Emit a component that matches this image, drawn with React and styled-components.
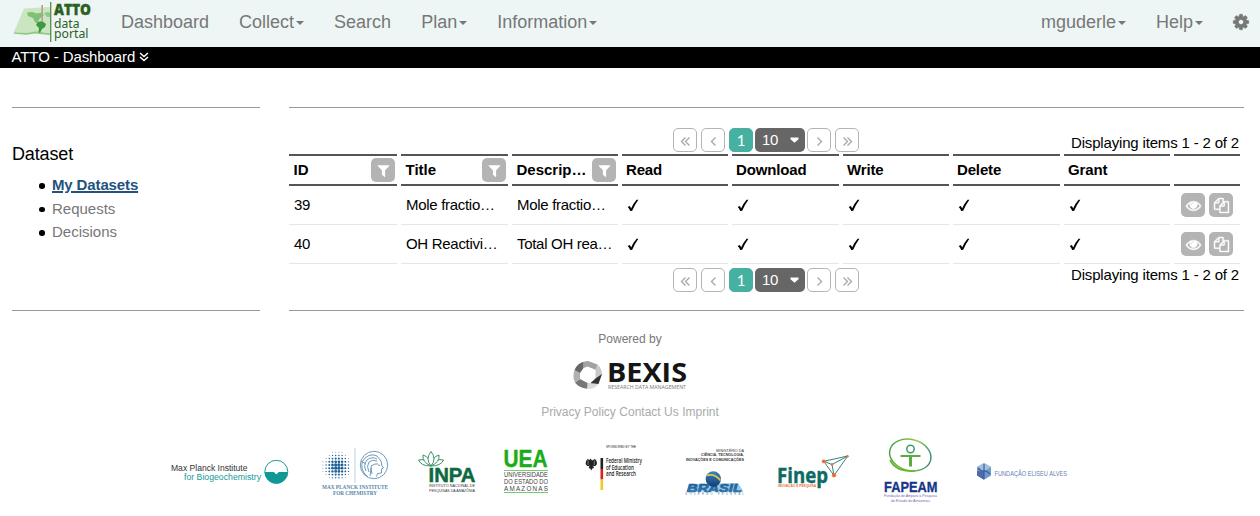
import React from "react";
import styled, { createGlobalStyle } from "styled-components";

const GlobalStyle = createGlobalStyle`
  * { box-sizing: border-box; }
  body {
    margin: 0;
    background: #fff;
    color: #000;
    font: 15px/20px "Liberation Sans", Arial, sans-serif;
    overflow: hidden;
  }
  svg { display: block; flex: none; overflow: visible; }
`;

const Page = styled.div`
  display: flex;
  flex-direction: column;
  height: 516px;
`;

const Navbar = styled.nav`
  display: flex;
  align-items: center;
  height: 47px;
  padding: 0 10px 4px 12px;
  background: #edf6f5;
  color: #777;
`;

const NavGroup = styled.div`
  display: flex;
  align-items: center;
  gap: 30px;
  margin-left: ${(p) => (p.$end ? "auto" : "29px")};
`;

const NavItem = styled.a`
  display: flex;
  align-items: center;
  margin-left: ${(p) => (p.$icon ? -1 : 0)}px;
  font-size: 18px;
  line-height: 20px;
  white-space: nowrap;
`;

const Caret = styled.span`
  margin: 2px 0 0 2px;
  border: 4px solid transparent;
  border-top-color: currentColor;
  border-bottom: 0;
`;

const TitleBar = styled.div`
  display: flex;
  align-items: center;
  gap: 4px;
  height: 21px;
  padding: 0 12px 1px 11.5px;
  background: #000;
  color: #fff;
  letter-spacing: -0.1px;
`;

const Columns = styled.main`
  display: flex;
  gap: 29px;
  margin: 39px 16px 0 12px;
`;

const Panel = styled.section`
  width: ${(p) => p.$width}px;
  height: 204px;
  border: solid #999;
  border-width: 1px 0;
`;

const SideTitle = styled.h2`
  margin: 36px 0 11px;
  font-size: 18px;
  font-weight: 400;
  line-height: 20px;
  letter-spacing: -0.15px;
`;

const SideList = styled.ul`
  display: flex;
  flex-direction: column;
  gap: 3.6px;
  margin: 0;
  padding: 0 0 0 27px;
  list-style: none;
`;

const SideItem = styled.li`
  display: flex;
  align-items: center;
  gap: 7.500px;
  &::before {
    content: "";
    width: 5.500px;
    height: 5.500px;
    margin-top: 2px;
    border-radius: 50%;
    background: #000;
  }
`;

const SideLink = styled.a`
  color: ${(p) => (p.$active ? "#23527c" : "#777")};
  font-weight: ${(p) => (p.$active ? 700 : 400)};
  letter-spacing: ${(p) => (p.$active ? "-0.13px" : "0")};
  text-decoration: ${(p) => (p.$active ? "underline" : "none")};
  text-decoration-thickness: 2px;
`;

const PagerBar = styled.div`
  display: flex;
  justify-content: space-between;
  height: 24px;
  padding: 0 5px 0 384px;
`;

const PagerButtons = styled.div`
  display: flex;
  gap: 4px;
`;

const PagerCurrent = styled.div`
  display: flex;
  gap: 2px;
  margin-right: -2px;
`;

const PagerButton = styled.button`
  display: flex;
  align-items: center;
  justify-content: center;
  width: 24px;
  height: 24px;
  padding: ${(p) => (p.$active ? "0 0 1px" : "2px 0 0")};
  border: 1px solid ${(p) => (p.$active ? "#46b1a1" : "#b4b4b4")};
  border-radius: 5px;
  background: ${(p) => (p.$active ? "#46b1a1" : "#fff")};
  color: ${(p) => (p.$active ? "#fff" : "#aaa")};
  font: 15px/20px Lato, sans-serif;
`;

const PageSize = styled.div`
  display: flex;
  align-items: center;
  justify-content: space-between;
  width: 50px;
  height: 24px;
  padding: 0 6px 0 7px;
  border-radius: 5px;
  background: #666;
  color: #fff;
  letter-spacing: -0.3px;
`;

const PagerInfo = styled.span`
  margin-top: ${(p) => p.$offset}px;
  letter-spacing: -0.17px;
  white-space: nowrap;
`;

const Table = styled.div`
  margin: 2px 0 4px;
`;

const Row = styled.div`
  display: grid;
  grid-template-columns: 108px 107px 106px 106px 107px 106px 107px 106px 66px;
  column-gap: 4px;
`;

const HeadCell = styled.div`
  display: flex;
  align-items: center;
  justify-content: space-between;
  height: 32px;
  padding: 0 2px 0 ${(p) => (p.$filter ? 4.5 : 4)}px;
  border: solid #555;
  border-width: 2px 0;
  font-weight: 700;
  letter-spacing: ${(p) => (p.$filter ? "0" : "-0.15px")};
`;

const Cell = styled.div`
  display: flex;
  align-items: center;
  gap: 4px;
  height: 39px;
  padding: 0 0 0 ${(p) => p.$pad ?? 5}px;
  border-bottom: 1px solid #e6e6e6;
  letter-spacing: -0.3px;
  white-space: nowrap;
`;

const IconButton = styled.button`
  display: flex;
  align-items: center;
  justify-content: center;
  width: 24px;
  height: 24px;
  flex: none;
  padding: 0;
  border: 0;
  border-radius: 5px;
  background: #b4b4b4;
  color: #fff;
`;

const Footer = styled.footer`
  display: flex;
  flex-direction: column;
  align-items: center;
  margin-top: 18px;
  color: #777;
  font-size: 12px;
`;

const FooterLinks = styled.div`
  display: flex;
  gap: 3.5px;
  margin-top: 10px;
  color: #aaa;
`;

const LogoRow = styled.div`
  display: flex;
  align-self: flex-start;
  margin: 10px 0 0 168px;
`;

const GLYPHS = {
  filter:
    "M1595 295q17 41-14 70l-493 493v742q0 42-39 59-13 5-25 5-27 0-45-19l-256-256q-19-19-19-45v-486l-493-493q-31-29-14-70 17-39 59-39h1280q42 0 59 39z",
  eye: "M1664 960q-152-236-381-353 61 104 61 225 0 185-131.5 316.5t-316.5 131.5-316.5-131.5-131.5-316.5q0-121 61-225-229 117-381 353 133 205 333.5 326.5t434.5 121.5 434.5-121.5 333.5-326.5zm-720-384q0-20-14-34t-34-14q-125 0-214.5 89.5t-89.5 214.5q0 20 14 34t34 14 34-14 14-34q0-86 61-147t147-61q20 0 34-14t14-34zm848 384q0 34-20 69-140 230-376.5 368.5t-499.5 138.5-499.5-139-376.5-368q-20-35-20-69t20-69q140-229 376.5-368t499.5-139 499.5 139 376.5 368q20 35 20 69z",
  files:
    "M1696 384q40 0 68 28t28 68v1216q0 40-28 68t-68 28h-960q-40 0-68-28t-28-68v-288h-544q-40 0-68-28t-28-68v-672q0-40 20-88t48-76l408-408q28-28 76-48t88-20h416q40 0 68 28t28 68v328q68-40 128-40h416zm-544 213l-299 299h299v-299zm-640-384l-299 299h299v-299zm196 647l316-316v-416h-384v416q0 40-28 68t-68 28h-416v640h512v-256q0-40 20-88t48-76zm956 804v-1152h-384v416q0 40-28 68t-68 28h-416v640h896z",
  cog: "M1152 896q0-106-75-181t-181-75-181 75-75 181 75 181 181 75 181-75 75-181zm512-109v222q0 12-8 23t-20 13l-185 28q-19 54-39 91 35 50 107 138 10 12 10 25t-9 23q-27 37-99 108t-94 71q-12 0-26-9l-138-108q-44 23-91 38-16 136-29 186-7 28-36 28h-222q-14 0-24.5-8.5t-11.5-21.5l-28-184q-49-16-90-37l-141 107q-10 9-25 9-14 0-25-11-126-114-165-168-7-10-7-23 0-12 8-23 15-21 51-66.5t54-70.5q-27-50-41-99l-183-27q-13-2-21-12.5t-8-23.5v-222q0-12 8-23t19-13l186-28q14-46 39-92-40-57-107-138-10-12-10-24 0-10 9-23 26-36 98.5-107.5t94.5-71.500q13 0 26 10l138 107q44-23 91-38 16-136 29-186 7-28 36-28h222q14 0 24.5 8.5t11.5 21.5l28 184q49 16 90 37l142-107q9-9 24-9 13 0 25 10 129 119 165 170 7 8 7 22 0 12-8 23-15 21-51 66.5t-54 70.5q26 50 41 98l183 28q13 2 21 12.5t8 23.5z",
};

const Glyph = ({ name, size = 16, weight = 0 }) => (
  <svg width={size} height={size} viewBox="0 0 1792 1792" fill="currentColor" stroke="currentColor" strokeWidth={weight}>
    <path d={GLYPHS[name]} />
  </svg>
);

const ANGLES = {
  first: "M5.5 1.5 1.500 5.500l4 4M9.500 1.500l-4 4 4 4",
  prev: "M7.500 1.500l-4 4 4 4",
  next: "M3.500 1.500l4 4-4 4",
  last: "M1.500 1.500l4 4-4 4M5.500 1.500l4 4-4 4",
};

const Angle = ({ name }) => (
  <svg width="11" height="11" viewBox="0 0 11 11" fill="none" stroke="currentColor" strokeWidth="1.4">
    <path d={ANGLES[name]} />
  </svg>
);

const Check = () => (
  <svg width="12" height="13" viewBox="0 0 12 13">
    <path d="M.7 8.100 2.800 7q.9 1.200 1.300 2.600Q6.400 4.300 9.600.8l1.800-.1Q7.600 5.800 5.200 11.800l-2 .2Q2.300 9.800.7 8.100z" />
  </svg>
);

/* Text stretched to a fixed width, as used inside the partner logos. */
const T = ({ x, y, w, s, children, ...rest }) => (
  <text x={x} y={y} fontSize={s} textLength={w} lengthAdjust="spacingAndGlyphs" {...rest}>
    {children}
  </text>
);

const Logo = ({ x, w, children }) => (
  <svg width={w} height="76" viewBox={`${x} 432 ${w} 76`} fontFamily="Liberation Sans, sans-serif">
    {children}
  </svg>
);

const AttoLogo = () => (
  <svg width="80" height="43" viewBox="12 0 80 43" fontFamily="Noto Sans, sans-serif" fill="#2a611e">
    <path d="M24 8.500 50 7v27.500L35 32.500l-9 1.500-12.500-1z" fill="#c9e6c0" />
    <path d="M14 32.500 27 33l9-1.500 14 2v1.500L35 33.500l-9 1.200-12-1z" fill="#8fc886" />
    <path d="M27 12.500l5-.5 5 1.500 5-1 2 3-3 2-2 2-1 3 3 2-2 .5-4-3-2-4-5-2z" fill="#7fc077" />
    <path d="M38 22l4-1 4 3-1 3-3 2-2 4-1.500-1 .5-4-3-3z" fill="#3d9a3e" />
    <path d="M44 13l4-1 2 1v4l-3 0z" fill="#8fca87" />
    <path d="M42.200 5v17" stroke="#b9a095" strokeWidth="1.600" />
    <path d="M50.700 2v40" stroke="#5b8a53" strokeWidth="1.300" />
    <T x="54" y="15.200" w="37" s="16.500" fontFamily="Open Sans, sans-serif" fontWeight="800" stroke="#2a611e" strokeWidth=".4">ATTO</T>
    <T x="54" y="27.700" w="25.500" s="13">data</T>
    <T x="54" y="38.300" w="34.500" s="13">portal</T>
  </svg>
);

const BexisLogo = () => (
  <svg width="116" height="43" viewBox="572 349 116 43">
    <path d="M583.500 361.700 588 361l9.500 3.500-1.500 5.500-8.500-3.500-4 1.500z" fill="#a2a2a2" />
    <path d="M597.500 364.500q4.300 4 4.500 10l-6.500 5.500v-11z" fill="#c8c8c8" />
    <path d="M602 374 598.500 384l-8.500-.5 5.500-5z" fill="#333" />
    <path d="M598.500 384q-4 5.500-12 5l-5-2 6-4.500 4 1z" fill="#dadada" />
    <path d="M587 388.500q-8-.5-12-6l5-3.500 7.500 4z" fill="#777" />
    <path d="M575 382.500q-3-6-.5-12.500l5.500 3v6z" fill="#b0b0b0" />
    <path d="M574.500 370q2.500-6.500 9-8.300v6.300l-3.500 5z" fill="#666" />
    <T x="607" y="382" w="80" s="27" fontFamily="Open Sans, sans-serif" fontWeight="700" fill="#151515">BEXIS</T>
    <T x="608" y="388.700" w="78" s="5" fontFamily="Open Sans, sans-serif" fill="#777">RESEARCH DATA MANAGEMENT</T>
  </svg>
);

const HALFTONE = [];
for (let r = -4; r <= 4; r++)
  for (let c = -4; c <= 4; c++) {
    const d = Math.hypot(r - 0.5, c - 0.5);
    if (d < 4.8) HALFTONE.push([335.7 + c * 3.2, 465 + r * 3.2, Math.max(0.45, 1.9 - d * 0.33)]);
  }

const BiogeochemistryLogo = () => (
  <Logo x={168} w={140}>
    <T x="171" y="470.700" w="76.500" s="8.500" fill="#333">Max Planck Institute</T>
    <T x="184" y="480" w="77" s="8.500" fill="#159a9a">for Biogeochemistry</T>
    <circle cx="276.300" cy="471.800" r="11.500" fill="#fff" stroke="#159a9a" />
    <path d="M264.800 472h8.500q1.500 0 2 1.500 1 1.500 2 0 .5-1.500 2-1.500h8.500a11.500 11.500 0 0 1-23 0z" fill="#0f9896" />
  </Logo>
);

const ChemistryLogo = () => (
  <Logo x={308} w={96}>
    {HALFTONE.map(([x, y, r]) => (
      <circle key={`${x},${y}`} cx={x} cy={y} r={r} fill="#1f6196" />
    ))}
    <path d="M355 448v35" stroke="#a9c5d8" strokeWidth=".8" />
    <g fill="none" stroke="#5f8fb3" strokeWidth=".9">
      <circle cx="374" cy="465" r="13.700" />
      <path d="M364 473q-5-9 1-15 6-5 12-2l4 5 1 5 1.500 2-2 1v4l-4 .5-1 3M366 471q-3-6 1-11 5-4 10-1M369 472q-3-6 0-10 3-3 8-1M372 474q-1-4-1-8l4-2 3 0M378 465l2 .5M364 473l4 4M371 468l-1 8M361 461l5 3" />
    </g>
    <g fontFamily="Liberation Serif, serif" fontWeight="700" fill="#5585aa">
      <T x="322" y="488.700" w="66" s="6">MAX PLANCK INSTITUTE</T>
      <T x="333" y="494.700" w="44" s="6">FOR CHEMISTRY</T>
    </g>
  </Logo>
);

const InpaLogo = () => (
  <Logo x={404} w={86}>
    <g fill="#fff" stroke="#2c8558" strokeWidth=".9">
      <path d="M431 466q-10 0-12.500-6 8-2 12.500 6q4.500-8 12.500-6-2.500 6-12.500 6z" />
      <path d="M431 466q-9-4-8-11 7 2 8 11q1-9 8-11 1 7-8 11z" />
      <path d="M431 466q-6-7 0-14.500 6 7.500 0 14.500z" />
    </g>
    <T x="428.500" y="482" w="47" s="20.500" fontWeight="700" fill="#0d693f" stroke="#0d693f" strokeWidth=".5">INPA</T>
    <T x="429" y="487.200" w="46" s="4.200" fill="#333">INSTITUTO NACIONAL DE</T>
    <T x="429" y="492.200" w="46" s="4.200" fill="#333">PESQUISAS DA AMAZÔNIA</T>
  </Logo>
);

const UeaLogo = () => (
  <Logo x={490} w={76}>
    <T x="503.500" y="466.700" w="44" s="23" fontWeight="700" fill="#18ad18" stroke="#18ad18" strokeWidth=".4">UEA</T>
    <path d="M504 470.500h44M504 492.500h44" stroke="#72cd72" />
    <g fill="#444">
      <T x="504" y="476.700" w="44" s="6.300">UNIVERSIDADE</T>
      <T x="504" y="484" w="44" s="6.300">DO ESTADO DO</T>
      <text x="504" y="491.200" fontSize="6.300" textLength="44">AMAZONAS</text>
    </g>
  </Logo>
);

const MinistryLogo = () => (
  <Logo x={566} w={98}>
    <g fill="#222">
      <T x="606" y="448.200" w="30" s="3.900">SPONSORED BY THE</T>
      <path d="M590.500 458.500l1.500 2 3-1.500q2.500 2 2 5l-1.500 2-2 0 .5 2-1.700.5-1 2-1-2-1.700-.5.5-2-2 0-1.500-2q-.5-3 2-5l2 1z" />
      <path d="M588 460v5M594.300 460.500v4.500M589.500 465.500l-1 2M593 465.500l1 2" stroke="#fff" strokeWidth=".4" />
      <rect x="600.500" y="458" width="2.600" height="11" />
      <g fontFamily="Open Sans, sans-serif" fontWeight="600">
        <T x="606" y="463" w="36" s="6.300">Federal Ministry</T>
        <T x="606" y="469.500" w="28" s="6.300">of Education</T>
        <T x="606" y="476" w="30" s="6.300">and Research</T>
      </g>
    </g>
    <rect x="600.500" y="469" width="2.600" height="10.500" fill="#dc1f26" />
    <rect x="600.500" y="479.500" width="2.600" height="10.500" fill="#f6c52c" />
  </Logo>
);

const BrasilLogo = () => (
  <Logo x={664} w={96}>
    <defs>
      <linearGradient id="globe" x2="0" y2="1">
        <stop stopColor="#3d84bd" />
        <stop offset="1" stopColor="#113d74" />
      </linearGradient>
      <linearGradient id="letters" x2="0" y2="1">
        <stop stopColor="#174f8b" />
        <stop offset="1" stopColor="#388ac4" />
      </linearGradient>
    </defs>
    <g fill="#333">
      <T x="716" y="452.300" w="28" s="3.500">MINISTÉRIO DA</T>
      <T x="701" y="456.400" w="43" s="3.700" fontWeight="700">CIÊNCIA, TECNOLOGIA,</T>
      <T x="686" y="460.500" w="58" s="3.700" fontWeight="700">INOVAÇÕES E COMUNICAÇÕES</T>
    </g>
    <path d="M690 484l48-1 5.500 8.500H686z" fill="#9cc6e4" />
    <T x="687" y="491.500" w="55" s="11.500" fontWeight="700" fontStyle="italic" fill="url(#letters)" stroke="#20639d" strokeWidth=".6">BRASIL</T>
    <circle cx="713.300" cy="479" r="7.700" fill="url(#globe)" />
    <path d="M706.500 475.500q8-2.500 14 5" fill="none" stroke="#d9c94a" strokeWidth="1.700" />
    <text x="685" y="494.800" fontSize="2.600" textLength="59" fill="#4678a5">GOVERNO FEDERAL</text>
  </Logo>
);

const FinepLogo = () => (
  <Logo x={760} w={102}>
    <T x="777" y="482.500" w="51" s="21" fontFamily="Open Sans, sans-serif" fontWeight="700" fill="#0d6b64" stroke="#0d6b64" strokeWidth=".4">Finep</T>
    <T x="778" y="487.200" w="38" s="3.900" fontWeight="700" fill="#e56d3c">INOVAÇÃO E PESQUISA</T>
    <path d="M823.700 461.300 847.700 456 834 475.500zL832 464.500l2 11M832 464.500l15.700-8.500" fill="none" stroke="#37827b" />
    <g fill="#ef6b38">
      <circle cx="823.700" cy="461.300" r="1.900" />
      <circle cx="847.500" cy="456.200" r="1.200" />
      <circle cx="832" cy="464.500" r="1.300" />
      <circle cx="834" cy="475.300" r="2.100" />
    </g>
  </Logo>
);

const FapeamLogo = () => (
  <Logo x={862} w={94}>
    <defs>
      <linearGradient id="ring">
        <stop stopColor="#3aa13e" />
        <stop offset=".55" stopColor="#9dcc3d" />
        <stop offset="1" stopColor="#358e77" />
      </linearGradient>
    </defs>
    <ellipse cx="910.300" cy="455" rx="21" ry="15.500" transform="rotate(15 910.300 455)" fill="none" stroke="url(#ring)" strokeWidth="1.400" />
    <path d="M890 460q6 12 25 11" fill="none" stroke="#68b52e" strokeWidth="1.700" />
    <circle cx="910.500" cy="449" r="3.700" fill="none" stroke="#399d69" strokeWidth="1.500" />
    <path d="M900.500 455h20v2h-8.500v9.500h-3V457h-8.500z" fill="#58ac42" />
    <T x="884" y="491.500" w="53.500" s="14.500" fontWeight="700" fill="#17358a" stroke="#17358a" strokeWidth=".3">FAPEAM</T>
    <g fill="#7467ae">
      <T x="884" y="496.900" w="53" s="4.400">Fundação de Amparo à Pesquisa</T>
      <T x="891" y="501.800" w="39" s="4.400">do Estado do Amazonas</T>
    </g>
  </Logo>
);

const EliseuLogo = () => (
  <Logo x={956} w={120}>
    <path d="M984 463l7 4v8.500l-7 4.300-7-4.300V467z" fill="#6f9bc9" />
    <path d="M984 463l7 4-7 4.500-7-4.500z" fill="#a3c0df" />
    <path d="M977 471l7 .5v8.300l-7-4.300z" fill="#5369a9" />
    <path d="M978 468q4 4 6 3t6 3M984 464v15" fill="none" stroke="#3860a1" strokeWidth="1.200" />
    <T x="994.500" y="475.500" w="72.500" s="8" fill="#5f83ad">FUNDAÇÃO ELISEU ALVES</T>
  </Logo>
);

const Pager = ({ infoOffset }) => (
  <PagerBar>
    <PagerButtons>
      <PagerButton><Angle name="first" /></PagerButton>
      <PagerButton><Angle name="prev" /></PagerButton>
      <PagerCurrent>
        <PagerButton $active>1</PagerButton>
        <PageSize>
          10
          <svg width="9" height="6" viewBox="0 0 9 6" fill="#fff">
            <path d="M.5.5h8v1.700L4.500 5.700.5 2.200z" />
          </svg>
        </PageSize>
      </PagerCurrent>
      <PagerButton><Angle name="next" /></PagerButton>
      <PagerButton><Angle name="last" /></PagerButton>
    </PagerButtons>
    <PagerInfo $offset={infoOffset}>Displaying items 1 - 2 of 2</PagerInfo>
  </PagerBar>
);

const GridPanel = styled(Panel)`
  padding-top: 20px;
`;

const HEADERS = [
  ["ID", true],
  ["Title", true],
  ["Descrip…", true],
  ["Read"],
  ["Download"],
  ["Write"],
  ["Delete"],
  ["Grant"],
  [""],
];

const DATASETS = [
  ["39", "Mole fractio…", "Mole fractio…"],
  ["40", "OH Reactivi…", "Total OH rea…"],
];

const RIGHTS = ["Read", "Download", "Write", "Delete", "Grant"];

export default function App() {
  return (
    <Page>
      <GlobalStyle />
      <Navbar>
        <AttoLogo />
        <NavGroup>
          <NavItem>Dashboard</NavItem>
          <NavItem>Collect<Caret /></NavItem>
          <NavItem>Search</NavItem>
          <NavItem>Plan<Caret /></NavItem>
          <NavItem>Information<Caret /></NavItem>
        </NavGroup>
        <NavGroup $end>
          <NavItem>mguderle<Caret /></NavItem>
          <NavItem>Help<Caret /></NavItem>
          <NavItem $icon><Glyph name="cog" size={18} weight={60} /></NavItem>
        </NavGroup>
      </Navbar>
      <TitleBar>
        ATTO - Dashboard
        <svg width="10" height="10" viewBox="0 0 10 10" fill="none" stroke="#fff" strokeWidth="1.5">
          <path d="M1 1l4 3.500L9 1M1 5l4 3.500L9 5" />
        </svg>
      </TitleBar>
      <Columns>
        <Panel $width={248}>
          <SideTitle>Dataset</SideTitle>
          <SideList>
            <SideItem><SideLink $active>My Datasets</SideLink></SideItem>
            <SideItem><SideLink>Requests</SideLink></SideItem>
            <SideItem><SideLink>Decisions</SideLink></SideItem>
          </SideList>
        </Panel>
        <GridPanel $width={955}>
          <Pager infoOffset={5} />
          <Table>
            <Row>
              {HEADERS.map(([label, filter]) => (
                <HeadCell key={label} $filter={filter}>
                  {label}
                  {filter && <IconButton><Glyph name="filter" size={15} /></IconButton>}
                </HeadCell>
              ))}
            </Row>
            {DATASETS.map(([id, title, description]) => (
              <Row key={id}>
                <Cell>{id}</Cell>
                <Cell>{title}</Cell>
                <Cell>{description}</Cell>
                {RIGHTS.map((right) => (
                  <Cell key={right}><Check /></Cell>
                ))}
                <Cell $pad={7}>
                  <IconButton><Glyph name="eye" size={15} weight={60} /></IconButton>
                  <IconButton><Glyph name="files" size={15} weight={50} /></IconButton>
                </Cell>
              </Row>
            ))}
          </Table>
          <Pager infoOffset={-3} />
        </GridPanel>
      </Columns>
      <Footer>
        Powered by
        <BexisLogo />
        <FooterLinks>
          <span>Privacy Policy</span>
          <span>Contact Us</span>
          <span>Imprint</span>
        </FooterLinks>
        <LogoRow>
          <BiogeochemistryLogo />
          <ChemistryLogo />
          <InpaLogo />
          <UeaLogo />
          <MinistryLogo />
          <BrasilLogo />
          <FinepLogo />
          <FapeamLogo />
          <EliseuLogo />
        </LogoRow>
      </Footer>
    </Page>
  );
}
